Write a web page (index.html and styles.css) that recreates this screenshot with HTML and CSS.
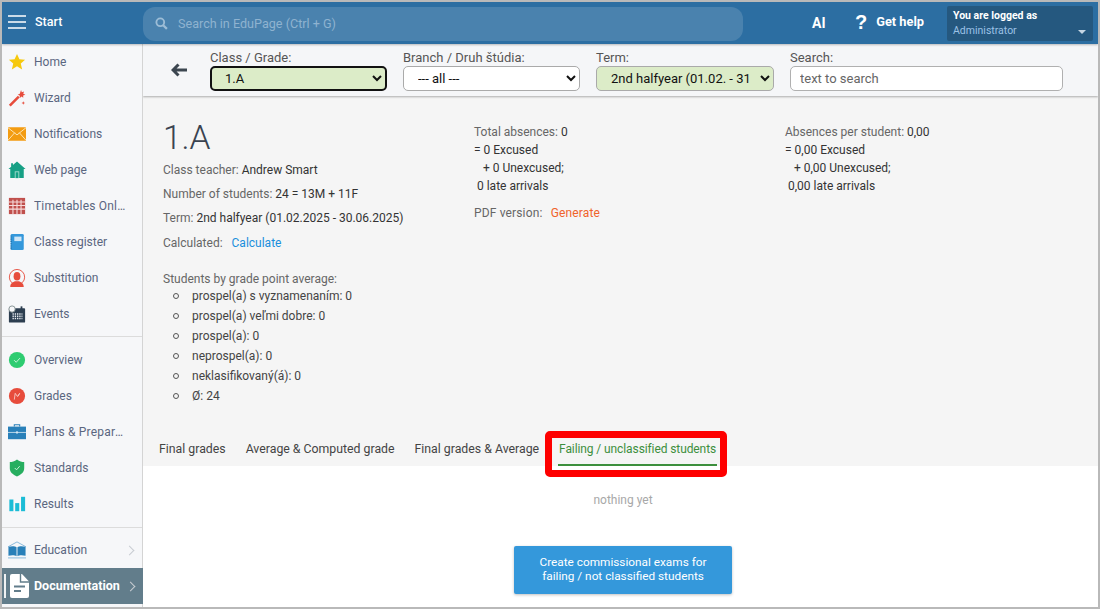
FILE: index.html
```html
<!DOCTYPE html>
<html lang="en">
<head>
<meta charset="utf-8">
<title>EduPage</title>
<link rel="stylesheet" href="styles.css">
</head>
<body>
<div class="frame">
  <header class="topbar">
    <div class="brand">
      <svg class="burger" viewBox="0 0 18 14" width="18" height="14"><path d="M0 1h18M0 7h18M0 13h18" stroke="#fff" stroke-width="1.6"/></svg>
      <span>Start</span>
    </div>
    <div class="globalsearch">
      <svg viewBox="0 0 14 14" width="13" height="13"><circle cx="5.7" cy="5.7" r="4.2" fill="none" stroke="#9dbdd6" stroke-width="2"/><path d="M8.8 8.8l4 4" stroke="#9dbdd6" stroke-width="2.4"/></svg>
      <span>Search in EduPage (Ctrl + G)</span>
    </div>
    <div class="ai">AI</div>
    <div class="help"><span class="qmark">?</span><span>Get help</span></div>
    <div class="user">
      <div class="user-l1">You are logged as</div>
      <div class="user-l2">Administrator</div>
      <span class="caret"></span>
    </div>
  </header>
  <div class="body">
    <nav class="side">
      <div class="group">
        <a class="item"><svg viewBox="0 0 20 20" class="ic"><path d="M10 1l2.700 6 6.300.6-4.800 4.200 1.500 6.400L10 14.800 4.300 18.200l1.500-6.400L1 7.600l6.300-.6z" fill="#f6c90e"/></svg>Home</a>
        <a class="item"><svg viewBox="0 0 20 20" class="ic"><path d="M1 17.500L11 7.500l2 2-10 10z" fill="#e74c3c"/><path d="M14.500 1l.8 2.500 2.500-.8-.8 2.500 2.300 1.300-2.500.8.200 2.500-2-1.500-1.800 1.700-.2-2.700-2.200-1 2.300-1z" fill="#e74c3c"/><path d="M17 13.500l.6 1.400 1.400.6-1.400.6-.6 1.400-.6-1.400-1.400-.6 1.400-.6z" fill="#e74c3c"/></svg>Wizard</a>
        <a class="item"><svg viewBox="0 0 20 20" class="ic"><rect x="0" y="2.500" width="20" height="15" fill="#f39c12"/><path d="M0 3l10 8 10-8M0 17l7.500-8.500M20 17l-7.500-8.500" fill="none" stroke="#fde3b0" stroke-width="1.100"/></svg>Notifications</a>
        <a class="item"><svg viewBox="0 0 20 20" class="ic"><path d="M10 .5l9.500 8.500H17.500v10H2.500V9H.5l3-2.700V2.500h2v2z" fill="#16a085"/><rect x="7.500" y="11.500" width="5" height="7.500" fill="#a5dccf"/><rect x="8.500" y="12.500" width="3" height="6.500" fill="#16a085"/></svg>Web page</a>
        <a class="item"><svg viewBox="0 0 20 20" class="ic"><rect x="1" y="1" width="18" height="18" fill="#c0504d"/><path d="M1 5.500h18M1 9.500h18M1 13.500h18M5.500 3v16M10 3v16M14.500 3v16" stroke="#f6dcdc" stroke-width="1.200"/></svg><span class="lbl">Timetables Online</span></a>
        <a class="item"><svg viewBox="0 0 20 20" class="ic"><rect x="3" y="1" width="14.500" height="18" rx="1.500" fill="#3498db"/><rect x="7" y="4" width="8" height="5" fill="#cfe6f7"/><path d="M3.500 3v15" stroke="#1f6fa8" stroke-width="1.400" stroke-dasharray="1 1"/></svg>Class register</a>
        <a class="item"><svg viewBox="0 0 20 20" class="ic"><circle cx="10" cy="9" r="8.500" fill="none" stroke="#e74c3c" stroke-width="1"/><ellipse cx="10" cy="8" rx="3.800" ry="4.800" fill="#e74c3c"/><path d="M2.500 20c0-4.500 3-5.500 5.500-6.500h4c2.500 1 5.500 2 5.500 6.500z" fill="#e74c3c"/></svg>Substitution</a>
        <a class="item"><svg viewBox="0 0 20 20" class="ic"><rect x="1" y="3.500" width="18" height="16" rx="1" fill="#2c3e50"/><rect x="14" y="1.500" width="2" height="4" fill="#2c3e50"/><path d="M5 10h11M5 12.500h11M5 15h11" stroke="#e8edf2" stroke-width="1.400" stroke-dasharray="1.500 1"/><circle cx="4.500" cy="4.500" r="3.500" fill="#f6f7f9" stroke="#7f8c8d" stroke-width="1"/></svg>Events</a>
      </div>
      <div class="group">
        <a class="item"><svg viewBox="0 0 20 20" class="ic"><circle cx="10" cy="10" r="9" fill="#2ecc71"/><path d="M6.800 10.200l2.300 2.300 4.200-4.600" fill="none" stroke="#d9f7e5" stroke-width="1"/></svg>Overview</a>
        <a class="item"><svg viewBox="0 0 20 20" class="ic"><circle cx="10" cy="10" r="9" fill="#e74c3c"/><path d="M7 14l1-7 2.500 3.500L13 7l-2 3.500" fill="none" stroke="#f7c9c4" stroke-width="1"/></svg>Grades</a>
        <a class="item"><svg viewBox="0 0 20 20" class="ic"><path d="M7 4V2h6v2" fill="none" stroke="#2980b9" stroke-width="1.200"/><rect x="0" y="4" width="20" height="14" fill="#2980b9"/><path d="M0 10.500h20" stroke="#d4e6f3" stroke-width=".9"/><circle cx="10" cy="10.500" r="1.300" fill="#d4e6f3"/></svg><span class="lbl">Plans &amp; Preparations</span></a>
        <a class="item"><svg viewBox="0 0 20 20" class="ic"><path d="M10 .5c2.800 2 5.500 2.800 8 2.800v7c0 4.500-3.500 7-8 9.200-4.500-2.200-8-4.700-8-9.200v-7c2.500 0 5.200-.8 8-2.800z" fill="#27ae60"/><path d="M7.500 10l2 2 3.500-4" fill="none" stroke="#d7f3e2" stroke-width="1"/></svg>Standards</a>
        <a class="item"><svg viewBox="0 0 20 20" class="ic"><rect x="1.500" y="5" width="4.500" height="13" fill="#1bbcd6"/><rect x="8" y="9" width="4.500" height="9" fill="#1bbcd6"/><rect x="14.500" y="2" width="4.500" height="16" fill="#1bbcd6"/></svg>Results</a>
      </div>
      <div class="group last">
        <a class="item"><svg viewBox="0 0 20 20" class="ic"><path d="M10 1L0 6.500M10 1l10 5.500" fill="none" stroke="#7fb3d8" stroke-width="1"/><path d="M.5 6.500c3.500-1 7-1 9 .5v10c-2-1.300-5.500-1.300-9-.5zM19.500 6.500c-3.500-1-7-1-9 .5v10c2-1.300 5.500-1.300 9-.5z" fill="#2980b9"/><path d="M0 18.800h20" stroke="#7fb3d8" stroke-width="1"/></svg>Education<span class="chev"></span></a>
        <a class="item active"><svg viewBox="0 0 26 26" class="ic doc"><path d="M1 1v24" stroke="#fff" stroke-width="1.800"/><path d="M6 3a2 2 0 0 1 2-2h10l7 7.500V23a2 2 0 0 1-2 2H8a2 2 0 0 1-2-2z" fill="#fff"/><path d="M16.500 1v8h8.500" fill="none" stroke="#627d8b" stroke-width="1.400"/><path d="M10 13.500h11M10 18h7" stroke="#627d8b" stroke-width="2"/></svg>Documentation<span class="chev"></span></a>
      </div>
    </nav>
    <main class="main">
      <div class="toolbar">
        <div class="back"><svg viewBox="0 0 16 14" width="16" height="14"><path d="M7.500 1.500L2 7l5.500 5.500M2.500 7H16" fill="none" stroke="#3c4650" stroke-width="3"/></svg></div>
        <label class="field f-class">Class / Grade:
          <select class="sel green focus"><option>1.A</option></select>
        </label>
        <label class="field f-branch">Branch / Druh štúdia:
          <select class="sel"><option>--- all ---</option></select>
        </label>
        <label class="field f-term">Term:
          <select class="sel green"><option>2nd halfyear (01.02. - 31.07.2025)</option></select>
        </label>
        <label class="field f-search">Search:
          <input class="txt" placeholder="text to search">
        </label>
      </div>
      <section class="summary">
        <div class="cols">
          <div class="col c1">
            <h1>1.A</h1>
            <p class="row">Class teacher: <b>Andrew Smart</b></p>
            <p class="row">Number of students: <b>24 = 13M + 11F</b></p>
            <p class="row">Term: <b>2nd halfyear (01.02.2025 - 30.06.2025)</b></p>
            <p class="row calc">Calculated: <a class="link">Calculate</a></p>
          </div>
          <div class="col c2">
            <p class="stat">Total absences: <b>0</b></p>
            <p class="stat"><b>= 0 Excused</b></p>
            <p class="stat"><b>&nbsp;&nbsp;&nbsp;+ 0 Unexcused;</b></p>
            <p class="stat"><b>&nbsp;0 late arrivals</b></p>
            <p class="pdf">PDF version: <a class="gen">Generate</a></p>
          </div>
          <div class="col c3">
            <p class="stat">Absences per student: <b>0,00</b></p>
            <p class="stat"><b>= 0,00 Excused</b></p>
            <p class="stat"><b>&nbsp;&nbsp;&nbsp;+ 0,00 Unexcused;</b></p>
            <p class="stat"><b>&nbsp;0,00 late arrivals</b></p>
          </div>
        </div>
        <div class="gpa">
          <div class="gpa-title">Students by grade point average:</div>
          <ul>
            <li>prospel(a) s vyznamenaním: 0</li>
            <li>prospel(a) veľmi dobre: 0</li>
            <li>prospel(a): 0</li>
            <li>neprospel(a): 0</li>
            <li>neklasifikovaný(á): 0</li>
            <li>Ø: 24</li>
          </ul>
        </div>
        <div class="tabs">
          <a class="tab">Final grades</a>
          <a class="tab">Average &amp; Computed grade</a>
          <a class="tab">Final grades &amp; Average</a>
          <a class="tab on">Failing / unclassified students</a>
        </div>
      </section>
      <section class="result">
        <div class="none">nothing yet</div>
        <button class="cta">Create commissional exams for<br>failing / not classified students</button>
      </section>
      <div class="highlight"></div>
    </main>
  </div>
</div>
</body>
</html>
```
FILE: styles.css
```css
* { box-sizing: border-box; }
html, body { margin: 0; height: 100%; overflow: hidden; }
body { font: 12px/16px Roboto, Arial, sans-serif; color: #333; }
.frame { width: 1100px; height: 609px; border: 2px solid #b9b9b9; display: flex; flex-direction: column; overflow: hidden; background: #fff; }
p { margin: 0; }
b { font-weight: 400; color: #333; }

.topbar { height: 42px; flex: none; background: #2c6ea2; color: #fff; display: flex; align-items: center; position: relative; z-index: 3; box-shadow: 0 1px 2px rgba(0,0,0,.25); }
.brand { width: 141px; flex: none; display: flex; align-items: center; gap: 9px; padding: 0 0 2px 6px; font-size: 12.500px; font-weight: 500; }
.globalsearch { width: 600px; height: 34px; margin-top: 1px; background: #4a82ae; border-radius: 12px; display: flex; align-items: center; gap: 10px; padding-left: 12px; color: #8fb3d0; font-size: 12.600px; }
.ai { margin-left: 69px; width: 14px; font-size: 14px; font-weight: 700; }
.help { margin-left: 29px; width: 92px; display: flex; align-items: center; gap: 9px; font-size: 12.800px; font-weight: 700; padding-bottom: 2px; }
.qmark { font-size: 20px; font-weight: 700; font-family: "Liberation Sans", Arial, sans-serif; }
.user { position: relative; width: 146px; height: 35px; background: #25587f; border-radius: 2px; padding: 3px 6px; }
.user-l1 { font-size: 10.500px; font-weight: 700; line-height: 14px; }
.user-l2 { font-size: 10.500px; line-height: 15px; color: #9cc2e6; }
.caret { position: absolute; right: 7px; bottom: 7px; border: 4px solid transparent; border-top: 4px solid #c6d6e3; border-bottom: 0; }

.body { flex: 1; display: flex; min-height: 0; }
.side { width: 141px; flex: none; background: #f6f7f9; border-right: 1px solid #d4d4d4; position: relative; z-index: 2; }
.group { padding: 0 0 4px; border-bottom: 1px solid #dcdcdc; margin-bottom: 5px; }
.group + .group { padding-bottom: 5px; margin-bottom: 4px; }
.group.last { border: 0; margin: 0; padding: 0; }
.item { display: flex; align-items: center; height: 36px; padding-left: 6px; gap: 8px; color: #5a6680; position: relative; white-space: nowrap; }
.ic { width: 18px; height: 18px; flex: none; }
.lbl { max-width: 94px; overflow: hidden; text-overflow: ellipsis; letter-spacing: .2px; }
.chev { position: absolute; right: 9px; top: 15px; width: 7px; height: 7px; border-top: 1px solid #c8ccd2; border-right: 1px solid #c8ccd2; transform: rotate(45deg); }
.item.active { background: #627d8b; color: #fff; font-weight: 700; font-size: 12.500px; margin-right: -1px; padding-left: 2px; gap: 4px; }
.ic.doc { width: 26px; height: 26px; }

.main { flex: 1; min-width: 0; display: flex; flex-direction: column; position: relative; }
.toolbar { height: 52px; flex: none; background: #f5f6f8; display: flex; padding-left: 28px; padding-top: 6px; box-shadow: 0 1px 2px rgba(0,0,0,.3); position: relative; z-index: 1; color: #555; }
.back { width: 39px; padding-top: 13px; }
.field { display: flex; flex-direction: column; line-height: 16px; font-size: 13px; color: #555; }
.f-class { width: 193px; }
.f-branch { width: 193px; }
.f-term { width: 194px; }
.f-search { width: 273px; }
.sel { height: 25px; border: 1px solid #aaa; border-radius: 5px; background: #fff; font: 13px Roboto, Arial, sans-serif; color: #111; padding: 0 8px 0 10px; }
.f-class .sel { width: 177px; }
.f-branch .sel { width: 177px; }
.f-term .sel { width: 178px; }
.sel.green { background: #dcecc8; }
.sel.focus { border: 2px solid #111; padding-left: 9px; }
.txt { width: 273px; height: 25px; border: 1px solid #b0b0b0; border-radius: 5px; padding: 0 9px; font: 13px Roboto, Arial, sans-serif; background: #fff; }
.txt::placeholder { color: #666; }

.summary { height: 370px; flex: none; background: #f5f5f5; padding: 0 16px; position: relative; }
.cols { display: flex; height: 168px; }
.col { flex: none; color: #666; }
.c1 { width: 315px; padding: 24px 0 0 4px; }
.c2 { width: 311px; padding-top: 28px; }
.c3 { padding-top: 28px; }
h1 { margin: 0 0 6px; font-size: 33.500px; font-weight: 300; line-height: 36px; color: #3a4350; }
.row { height: 24px; }
.calc { padding-top: 1px; }
.link { color: #1b8fdc; margin-left: 6px; }
.stat { height: 18px; }
.pdf { margin-top: 1px; padding-top: 8px; letter-spacing: .15px; }
.gen { color: #f0632b; margin-left: 5px; }
.gpa { padding: 7px 0 0 4px; color: #666; }
.gpa ul { list-style: none; margin: 0; padding: 1px 0 0 10px; }
.gpa-title { height: 14px; }
.gpa li { height: 20px; line-height: 20px; color: #444; }
.gpa li::before { content: ""; display: inline-block; width: 4px; height: 4px; border: 1px solid #555; border-radius: 50%; margin-right: 13px; vertical-align: 1px; }
.tabs { position: absolute; left: 6px; bottom: 0; display: flex; height: 36px; font-size: 12.300px; }
.tab { padding: 11px 10px 0; color: #444; white-space: nowrap; }
.tab.on { color: #3d8f3d; position: relative; font-size: 12px; letter-spacing: -.1px; }
.tab.on::after { content: ""; position: absolute; left: 9px; right: 9px; bottom: 0; height: 2px; background: #3d8f3d; }

.result { flex: 1; background: #fff; display: flex; flex-direction: column; align-items: center; padding: 26px 0 0 5px; }
.none { color: #a8a8a8; line-height: 16px; }
.cta { width: 218px; height: 48px; margin-top: 38px; border: 0; border-radius: 2px; padding: 0 0 2px; background: #3498db; color: #fff; font: 11.800px/14px Roboto, Arial, sans-serif; box-shadow: 0 1px 3px rgba(0,0,0,.25); }

.highlight { position: absolute; left: 402px; top: 387px; width: 182px; height: 46px; border: 7px solid #fe0000; border-radius: 5px; pointer-events: none; }
```
